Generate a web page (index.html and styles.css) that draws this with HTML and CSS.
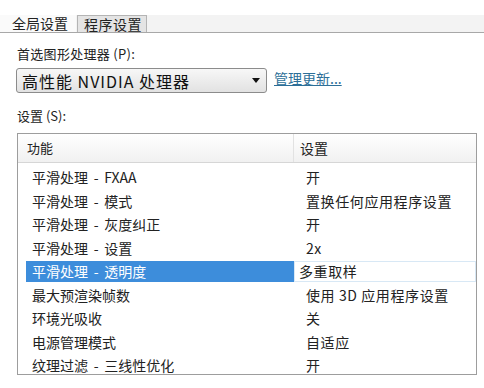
FILE: index.html
```html
<!DOCTYPE html>
<html lang="zh">
<head>
<meta charset="utf-8">
<link rel="stylesheet" href="styles.css">
</head>
<body>
<div class="page">
  <div class="tabs">
    <div class="tab active">全局设置</div>
    <div class="tab">程序设置</div>
  </div>
  <div class="label gpu-label">首选图形处理器 (P):</div>
  <div class="gpu-row">
    <div class="select">
      <span class="select-text">高性能 NVIDIA 处理器</span>
      <svg class="arrow" width="8" height="5" viewBox="0 0 8 5"><path d="M0 0H8L4 5Z" fill="#111"/></svg>
    </div>
    <span class="link">管理更新...</span>
  </div>
  <div class="label set-label">设置 (S):</div>
  <div class="table">
    <div class="thead">
      <div class="th c1">功能</div>
      <div class="th c2">设置</div>
    </div>
    <div class="tbody">
      <div class="row"><div class="td c1">平滑处理 - FXAA</div><div class="td c2">开</div></div>
      <div class="row"><div class="td c1">平滑处理 - 模式</div><div class="td c2">置换任何应用程序设置</div></div>
      <div class="row"><div class="td c1">平滑处理 - 灰度纠正</div><div class="td c2">开</div></div>
      <div class="row"><div class="td c1">平滑处理 - 设置</div><div class="td c2">2x</div></div>
      <div class="row selected"><div class="td c1">平滑处理 - 透明度</div><div class="td c2">多重取样</div></div>
      <div class="row"><div class="td c1">最大预渲染帧数</div><div class="td c2">使用 3D 应用程序设置</div></div>
      <div class="row"><div class="td c1">环境光吸收</div><div class="td c2">关</div></div>
      <div class="row"><div class="td c1">电源管理模式</div><div class="td c2">自适应</div></div>
      <div class="row"><div class="td c1">纹理过滤 - 三线性优化</div><div class="td c2">开</div></div>
    </div>
  </div>
</div>
</body>
</html>
```

FILE: styles.css
```css
html, body {
  margin: 0;
  padding: 0;
  background: #fff;
}
.page {
  width: 484px;
  height: 388px;
  overflow: hidden;
  font-family: "Noto Sans CJK SC", "Noto Sans", sans-serif;
  font-size: 13px;
  color: #222;
}
.tabs {
  display: flex;
  margin-top: 15px;
  height: 17px;
  background: #f3f3f3;
  border-bottom: 1px solid #a8a8a8;
  align-items: stretch;
}
.tab {
  font-size: 14px;
  line-height: 17px;
  padding: 0 8px 0 12px;
}
.tab.active {
  background: #fafafa;
}
.tab + .tab {
  margin-left: 1px;
  padding: 0 4px 0 6px;
  background: #e4e4e4;
  border: 1px solid #b4b4b4;
  border-bottom: none;
  line-height: 16px;
  letter-spacing: 0.5px;
}
.label {
  margin-left: 17px;
  font-size: 13px;
  line-height: 16px;
}
.gpu-label {
  margin-top: 13px;
  letter-spacing: 0.3px;
}
.gpu-row {
  display: flex;
  align-items: center;
  margin-top: 6px;
  margin-left: 16px;
  height: 25px;
}
.select {
  box-sizing: border-box;
  width: 251px;
  height: 25px;
  border: 1px solid #8c8c8c;
  border-radius: 3px;
  background: linear-gradient(#f7f7f7, #e2e2e2);
  display: flex;
  align-items: center;
  padding: 0 6px 0 5px;
}
.select-text {
  flex: 1;
  font-size: 16px;
  letter-spacing: 1px;
  color: #111;
}
.arrow {
  display: block;
}
.link {
  margin-left: 7px;
  margin-top: -6px;
  font-size: 14px;
  color: #2d6f98;
  text-decoration: underline;
}
.set-label {
  margin-top: 15px;
}
.table {
  box-sizing: border-box;
  margin-top: 9px;
  margin-left: 17px;
  width: 460px;
  height: 242px;
  border: 1px solid #9d9d9d;
  overflow: hidden;
}
.thead {
  display: flex;
  height: 28px;
  background: linear-gradient(#ffffff, #f1f1f1);
  border-bottom: 1px solid #d6d6d6;
}
.th {
  line-height: 28px;
  font-size: 13px;
}
.th.c1 {
  width: 276px;
  padding-left: 9px;
  box-sizing: border-box;
  border-right: 1px solid #e2e2e2;
}
.th.c2 {
  padding-left: 6px;
  font-size: 14px;
}
.tbody {
  padding-top: 3px;
}
.row {
  display: flex;
  height: 23.5px;
  align-items: center;
}
.td {
  font-size: 14px;
  line-height: 21px;
}
.td.c1 {
  box-sizing: border-box;
  width: 268px;
  margin-left: 8px;
  padding-left: 6px;
  word-spacing: 2.5px;
}
.td.c2 {
  padding-left: 12px;
  letter-spacing: 0.6px;
}
.row.selected .td.c1 {
  background: #3d8ddb;
  color: #fff;
}
.row.selected .td.c2 {
  padding-left: 4px;
  flex: 1;
  border: 1px solid #d8e8f5;
  line-height: 19px;
}
```
